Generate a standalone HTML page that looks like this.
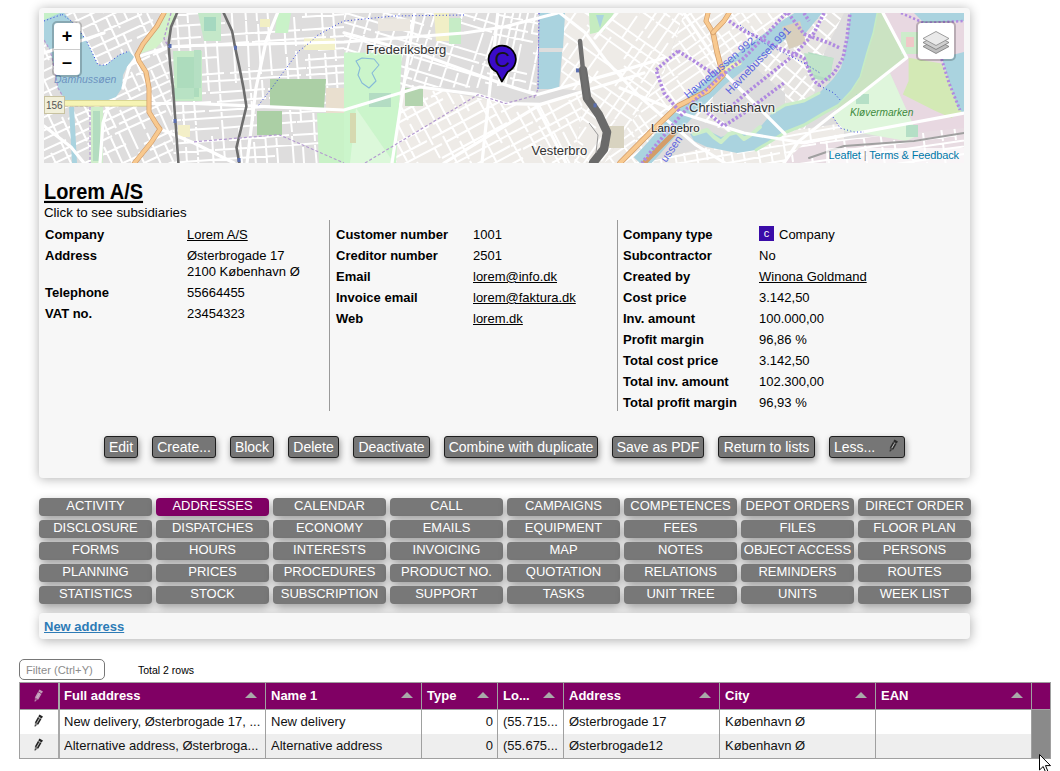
<!DOCTYPE html>
<html><head><meta charset="utf-8">
<style>
*{box-sizing:border-box;margin:0;padding:0}
html,body{width:1060px;height:771px;overflow:hidden;background:#fff;font-family:"Liberation Sans",sans-serif;color:#111;position:relative}
.abs{position:absolute;white-space:nowrap}
#panel{position:absolute;left:39px;top:8px;width:931px;height:470px;background:#f7f7f7;border-radius:4px;box-shadow:0 1px 11px rgba(0,0,0,.3)}
#map{position:absolute;left:44px;top:13px;width:920px;height:150px;overflow:hidden;background:#e2e1df}
.title{left:44px;top:177px;font-size:21px;font-weight:bold;text-decoration:underline;line-height:26px;color:#000;transform:scale(.95,1.085);transform-origin:0 0}
.sub{left:44px;top:205px;font-size:13.3px;line-height:16px;color:#000}
.t{font-size:13px;line-height:16px;color:#000}
.b{font-weight:bold}
.u{text-decoration:underline}
.sep{position:absolute;top:220px;width:1px;height:191px;background:#9a9a9a}
.btn{position:absolute;top:436px;height:22px;border:1px solid #1e1e1e;border-radius:3px;background:#767676;color:#fff;font-size:14px;line-height:20px;text-align:center;box-shadow:1px 3px 6px rgba(0,0,0,.4);white-space:nowrap}
.tab{position:absolute;width:113px;height:18px;border-radius:4px;background:#787878;color:#fff;font-size:13px;line-height:15px;text-align:center;box-shadow:1px 4px 10px rgba(0,0,0,.38);white-space:nowrap;overflow:hidden}
.tab.on{background:#800064}
#panel2{position:absolute;left:39px;top:613px;width:931px;height:26px;background:#f7f7f7;border-radius:4px;box-shadow:1px 2px 11px rgba(0,0,0,.3)}
.newaddr{left:44px;top:619px;font-size:13px;font-weight:bold;color:#2d7bb6;text-decoration:underline;line-height:16px}
#filter{position:absolute;left:19px;top:659px;width:86px;height:21px;border:1px solid #777;border-radius:5px;background:#fff;font-size:11.2px;color:#8c8c8c;padding-left:6px;line-height:20px}
.total{left:138px;top:664px;font-size:10.5px;line-height:12px;color:#000}
#grid{position:absolute;left:19px;top:682px;width:1032px;height:77px;border:1px solid #a0a0a0;background:#fff}
.hl{position:absolute;left:0;width:1030px;height:1px;background:#a0a0a0}
.hdr{position:absolute;left:0;top:0;width:1030px;height:26px;background:#800064}
.row{position:absolute;left:0;width:1012px}
.vl{position:absolute;top:0;width:1px;height:75px;background:#a0a0a0}
.hc{position:absolute;top:0;height:26px;line-height:26px;color:#fff;font-size:13px;font-weight:bold}
.cell{position:absolute;font-size:13px;line-height:24px;color:#111;white-space:nowrap;overflow:hidden}
.arr{position:absolute;top:9px;width:0;height:0;border-left:6px solid transparent;border-right:6px solid transparent;border-bottom:6px solid #a9a9a9}
</style></head><body>
<div id="panel"></div>
<div id="map"><svg width="920" height="150" viewBox="0 0 920 150" style="display:block"><defs><clipPath id="z1"><polygon points="0.0,0.0 132.0,0.0 125.0,40.0 130.0,150.0 0.0,150.0"/></clipPath><clipPath id="z2"><polygon points="132.0,0.0 300.0,0.0 300.0,150.0 130.0,150.0 125.0,40.0"/></clipPath><clipPath id="z3"><polygon points="300.0,0.0 455.0,0.0 440.0,75.0 376.0,74.0 300.0,100.0"/></clipPath><clipPath id="z4"><polygon points="455.0,0.0 496.0,0.0 492.0,80.0 461.0,72.0 440.0,75.0"/></clipPath><clipPath id="z5"><polygon points="300.0,100.0 376.0,74.0 461.0,90.0 497.0,92.0 541.0,78.0 530.0,150.0 300.0,150.0"/></clipPath><clipPath id="z6"><polygon points="521.0,0.0 640.0,0.0 620.0,60.0 560.0,150.0 530.0,150.0 541.0,78.0 516.0,76.0"/></clipPath><clipPath id="z7"><polygon points="640.0,0.0 760.0,0.0 700.0,60.0 640.0,101.0 595.0,150.0 560.0,150.0 620.0,60.0"/></clipPath><clipPath id="z8"><polygon points="760.0,0.0 800.0,0.0 780.0,40.0 760.0,120.0 700.0,125.0 640.0,101.0 700.0,60.0"/></clipPath><clipPath id="z9"><polygon points="700.0,125.0 800.0,110.0 800.0,150.0 600.0,150.0"/></clipPath><clipPath id="z10"><polygon points="760.0,130.0 920.0,115.0 920.0,150.0 740.0,150.0"/></clipPath></defs><rect x="0" y="0" width="920" height="150" fill="#dedddd" />
<polygon points="0.0,0.0 132.0,0.0 125.0,40.0 130.0,150.0 0.0,150.0" fill="#dedddd" />
<path clip-path="url(#z1)" d="M-73 25L23 -19M24 -20L89 -50M93 -52L184 -94M-68 36L-8 8M-8 8L53 -20M7 10L48 -10M48 -10L90 -29M93 -30L135 -50M-61 52L-13 29M-8 27L62 -6M-57 60L28 20M33 18L92 -10M96 -11L144 -34M-52 71L14 40M15 40L58 20M60 18L98 1M102 -1L183 -38M-47 80L42 38M44 37L109 7M-44 88L-6 71M-1 68L88 27M93 25L135 5M141 3L213 -31M-39 98L66 49M-34 108L33 77M66 62L106 43M109 42L162 17M-30 118L46 83M46 83L88 63M92 62L188 17M-25 129L20 108M24 106L54 93M54 93L141 52M142 51L218 16M-21 136L47 104M48 104L132 65M134 64L197 34M-17 145L22 127M27 124L93 93M96 92L189 48M-14 152L71 113M75 111L156 73M157 72L263 23M-10 160L68 123M71 121L122 98M-5 171L82 131M100 131L166 100M168 99L208 80M2 186L33 171M35 170L101 140M106 137L206 91M6 194L113 144M115 143L156 124M161 121L264 73M76 173L161 134M162 133L263 86M15 213L110 169M116 -64L121 -51M124 -47L143 -5M144 -3L160 32M161 34L176 67M188 91L210 138M103 -58L123 -15M125 -11L131 3M134 8L139 21M142 26L155 53M155 54L165 74M165 75L186 121M189 127L211 173M92 -53L99 -38M105 -25L121 9M131 29L153 78M171 117L189 155M81 -48L92 -25M103 -0L120 36M122 41L135 67M135 69L146 92M149 97L159 120M161 123L176 156M73 -44L83 -24M84 -21L90 -7M92 -4L102 19M104 21L124 66M126 68L145 110M148 115L156 133M158 138L178 181M62 -39L84 8M107 57L128 103M130 107L148 145M149 147L157 164M61 -17L76 15M79 20L92 49M93 50L102 71M104 75L117 102M117 102L128 127M129 128L138 149M140 151L152 177M45 -31L60 0M62 4L75 32M77 36L86 56M87 59L96 78M120 129L137 165M34 -26L55 19M57 23L78 69M80 72L101 116M103 120L121 160M21 -20L43 29M44 30L54 50M55 53L74 94M76 97L94 136M95 139L103 156M103 157L126 206M34 32L53 73M54 77L72 115M75 120L97 168M99 173L112 201M25 36L41 70M41 70L52 93M54 97L59 108M60 110L65 122M67 125L87 169M88 170L103 202M-6 -7L11 30M13 35L36 84M37 86L58 130M60 134L72 159M72 160L92 202M-17 -2L5 47M8 52L15 68M17 71L28 94M28 96L43 128M44 130L57 158M58 161L78 202M-29 4L-17 29M-17 29L-7 51M-5 56L15 99M18 104L31 133M52 177L60 194M-39 8L-34 19M1 95L15 125M17 129L34 165M35 167L51 202M-52 14L-31 58M-29 62L-13 97M7 140L15 157M16 159L29 188M31 191L49 231M-64 20L-58 31M-56 37L-38 74M-37 78L-20 113M-20 114L1 159M1 159L22 203M23 205L37 236" stroke="#fff" stroke-width="2.0" fill="none"/>
<polygon points="132.0,0.0 300.0,0.0 300.0,150.0 130.0,150.0 125.0,40.0" fill="#dedddd" />
<path clip-path="url(#z2)" d="M85 -27L200 -35M200 -35L304 -42M308 -43L362 -46M86 -17L126 -19M227 -26L304 -32M305 -32L333 -34M150 -12L228 -18M228 -18L284 -22M287 -22L407 -30M87 5L187 -2M193 -3L290 -10M88 16L181 10M258 4L362 -3M89 29L157 24M163 23L256 17M258 17L313 13M314 13L425 5M89 37L205 29M208 29L282 24M286 24L340 20M90 50L174 44M274 37L370 30M261 47L354 40M91 67L180 60M186 60L213 58M213 58L262 55M263 55L306 52M92 74L149 70M154 69L190 67M190 67L257 62M262 62L372 54M93 85L162 80M166 80L221 76M224 76L332 68M93 94L167 89M173 89L222 85M225 85L251 83M252 83L283 81M284 81L318 79M94 103L161 98M165 98L249 92M253 92L302 88M305 88L331 86M333 86L369 83M94 110L137 107M138 107L212 102M214 102L300 96M305 96L421 87M95 120L175 115M178 115L252 109M253 109L354 102M96 133L179 127M185 127L245 122M249 122L284 120M289 119L377 113M97 142L168 137M171 137L203 135M205 135L319 127M323 126L367 123M97 152L194 145M194 145L231 143M326 136L353 134M98 163L170 158M173 158L274 151M99 176L203 169M205 168L276 164M100 188L134 185M140 185L179 182M218 179L304 173M306 173L353 170M101 197L175 192M178 192L293 184M294 184L368 179M318 -53L321 -11M321 -5L325 41M325 42L327 72M327 76L331 126M331 129L333 162M333 166L337 218M302 -52L303 -26M307 24L310 63M310 67L314 121M314 121L316 153M316 158L319 198M285 -51L288 -7M289 -2L292 48M292 53L295 98M296 102L298 139M299 144L300 162M300 165L302 187M274 -50L278 4M278 4L280 36M281 40L284 85M284 89L286 115M286 118L287 131M287 136L289 155M289 160L291 189M259 -49L260 -31M260 -29L262 3M265 41L267 76M268 79L271 128M271 132L274 165M274 170L275 186M275 187L278 227M246 -48L250 0M250 4L252 33M252 38L256 84M256 86L257 108M259 134L262 181M263 183L264 209M236 -47L238 -16M239 -11L242 41M243 44L246 96M246 97L248 119M248 123L250 151M250 156L252 178M252 182L254 211M220 -46L224 6M224 10L228 62M232 121L236 175M236 178L239 219M210 -45L213 8M214 11L217 61M218 67L219 84M221 119L224 163M225 167L226 189M226 191L228 215M198 -45L202 7M202 8L203 29M204 31L205 54M205 55L207 78M207 80L209 108M210 129L214 174M214 177L217 226M187 -12L189 20M189 22L192 70M195 114L199 162M199 165L201 199M169 -21L173 30M173 32L176 78M176 79L178 106M178 107L181 148M181 153L184 193M157 -42L159 -9M159 -8L161 25M161 27L165 78M168 123L170 156M171 157L172 173M172 174L173 195M141 -41L144 10M145 13L148 65M148 65L152 112M152 114L154 142M154 144L156 175M156 179L160 226M133 6L136 49M136 53L137 66M137 67L138 87M139 91L141 130M142 134L144 167M144 171L148 218M120 -39L122 -19M122 -15L124 20M129 83L130 107M131 112L134 154M134 160L137 196M137 199L140 241M110 -38L113 4M113 9L115 30M115 34L117 62M118 68L119 88M119 93L123 138M123 141L125 168M125 169L126 190M126 191L128 223M103 2L105 40M106 45L108 87M109 88L112 136M112 136L115 185M115 187L117 213M88 -37L90 -6M91 -1L91 12M91 13L93 31M93 33L94 48M94 53L97 93M97 98L101 149" stroke="#fff" stroke-width="2.0" fill="none"/>
<polygon points="300.0,0.0 455.0,0.0 440.0,75.0 376.0,74.0 300.0,100.0" fill="#dedddd" />
<path clip-path="url(#z3)" d="M312 -69L386 -47M389 -46L470 -21M470 -21L570 10M308 -57L375 -36M378 -36L460 -10M463 -9L566 22M305 -46L335 -37M338 -36L390 -20M395 -19L461 2M371 -14L404 -4M405 -3L517 31M299 -26L369 -5M371 -4L448 19M295 -14L380 12M292 -3L335 10M339 11L388 26M393 28L507 62M289 6L327 17M331 19L435 50M438 51L466 60M286 18L338 34M341 35L368 43M370 44L450 68M450 68L552 100M282 30L340 48M343 49L426 74M279 39L368 66M370 67L483 101M277 46L339 65M339 65L419 89M419 89L500 114M274 55L363 82M363 82L392 91M398 92L444 107M448 108L501 124M272 63L350 87M352 88L446 117M449 118L540 145M268 75L314 89M316 89L404 116M406 117L460 133M265 86L304 98M308 100L412 131M413 132L448 142M449 143L547 173M262 95L359 124M364 126L419 143M421 143L517 173M259 104L321 123M327 124L365 136M488 -18L482 3M480 8L469 46M468 48L460 73M460 74L449 110M476 -21L473 -9M472 -8L465 15M454 50L447 76M445 81L435 112M435 114L429 134M427 138L422 157M420 162L407 207M464 -25L450 22M449 23L442 46M441 48L432 79M432 79L428 93M422 113L417 128M417 130L409 154M408 158L397 193M454 -28L449 -12M447 -8L439 19M439 20L430 47M429 52L421 79M420 82L411 112M410 114L398 155M442 -32L436 -10M435 -6L430 8M414 60L399 109M399 110L390 141M430 -36L417 6M417 7L406 42M406 43L392 86M387 103L383 116M383 117L369 163M415 -40L404 -5M404 -5L391 38M390 42L385 58M383 64L379 78M378 81L364 126M364 127L357 149M404 -43L396 -17M396 -15L387 14M386 17L370 68M369 72L363 91M362 95L350 134M382 -1L373 29M373 30L366 52M365 56L357 80M356 84L340 135M386 -49L380 -29M379 -26L370 1M370 3L362 28M362 29L346 81M345 85L336 115M334 120L324 154M372 -53L363 -25M362 -20L352 11M352 12L339 53M338 59L323 105M323 106L316 128M358 -58L350 -33M349 -29L345 -14M343 -9L336 14M335 17L323 57M322 59L313 88M301 127L291 161M333 -23L320 21M320 22L308 62M306 66L299 89M298 94L286 133M334 -65L326 -39M325 -35L314 -0M313 3L302 41M300 46L288 84M287 90L281 107M280 111L269 147M323 -68L315 -44M315 -44L303 -3M302 0L289 42M280 71L270 103M269 108L261 134" stroke="#fff" stroke-width="2.0" fill="none"/>
<polygon points="455.0,0.0 496.0,0.0 492.0,80.0 461.0,72.0 440.0,75.0" fill="#dedddd" />
<path clip-path="url(#z4)" d="M406 82L413 48M414 47L420 16M421 11L442 -88M415 84L426 34M436 -16L458 -116M423 85L441 3M442 -2L464 -108M433 88L448 16M454 34L476 -73M450 91L467 11M467 10L479 -43M457 93L474 10M475 7L489 -61M464 94L477 31M478 28L489 -23M488 19L494 -11M481 98L491 51M491 50L505 -17M492 100L516 -13M509 104L520 52M520 49L528 12M529 7L541 -49M425 -15L452 -10M452 -10L505 2M507 2L521 5M522 5L562 14M445 0L479 7M482 8L535 19M420 5L434 8M435 9L484 19M487 20L500 22M502 23L522 27M436 18L489 29M494 30L534 38M416 25L432 28M489 40L528 48M414 37L447 45M501 56L540 64M412 46L464 57M465 57L483 61M410 53L461 64M466 65L482 69M487 70L536 80M408 62L448 71M453 72L498 81M501 82L514 85M406 73L454 83M455 83L482 89M485 90L497 92M502 93L517 97" stroke="#fff" stroke-width="2.0" fill="none"/>
<polygon points="300.0,100.0 376.0,74.0 461.0,90.0 497.0,92.0 541.0,78.0 530.0,150.0 300.0,150.0" fill="#eeebe7" />
<path clip-path="url(#z5)" d="M246 63L330 18M252 74L283 57M284 57L352 21M352 21L392 -1M397 -3L484 -49M255 81L329 42M329 42L424 -9M261 92L329 57M330 56L431 2M436 -0L533 -52M265 99L299 81M301 80L374 42M377 40L428 13M432 11L494 -23M497 -24L578 -67M268 106L353 61M353 60L442 14M445 12L467 -0M468 -1L571 -55M274 117L375 63M377 62L443 27M444 27L529 -19M278 123L379 69M456 28L556 -25M282 131L319 111M429 53L485 23M489 21L580 -27M285 138L384 85M387 84L479 34M483 32L585 -22M289 144L347 113M352 111L399 86M500 32L563 -1M293 152L349 122M459 64L523 30M524 29L569 5M297 160L385 113M389 111L467 70M469 69L550 26M303 170L383 128M388 125L464 84M464 84L532 48M307 179L398 131M402 129L453 101M457 99L549 51M398 145L463 110M318 200L401 156M402 155L489 109M493 107L550 76M323 209L406 165M407 165L466 133M467 133L547 90M547 90L608 58M327 216L376 190M377 190L402 176M404 175L477 136M479 136L576 83M331 224L388 194M392 191L445 163M449 161L479 145M556 104L613 74M335 232L369 214M530 129L561 112M564 110L598 92M340 240L398 209M400 208L503 153M508 150L607 98M346 251L410 218M411 217L516 161M517 160L579 127M350 260L397 235M401 233L425 220M426 220L527 166M528 166L572 142M578 139L624 114M355 270L428 231M429 231L515 185M518 183L568 157M571 155L632 123M360 279L386 265M490 210L513 198M515 196L586 159M365 287L458 237M460 237L552 188M556 185L636 143M466 -61L474 -45M476 -42L492 -13M492 -12L510 21M510 21L520 41M522 45L541 81M571 136L577 149M470 -34L488 -1M489 0L507 34M507 35L521 60M521 60L538 93M540 97L549 113M550 115L567 148M570 153L583 178M451 -53L469 -18M472 -13L488 18M489 20L506 51M508 55L524 85M525 87L538 111M538 112L559 150M559 150L578 186M452 -25L464 -2M464 -2L485 36M485 37L510 84M521 103L543 145M544 148L557 172M558 174L576 208M433 -43L455 -1M473 33L491 66M493 70L507 96M507 96L516 114M519 119L534 148M551 179L565 206M425 -39L434 -23M435 -21L458 23M459 25L470 46M471 47L482 67M482 67L506 113M509 118L528 155M529 157L554 204M417 -35L436 1M436 2L446 21M447 22L454 35M457 41L470 65M471 67L482 89M484 93L493 109M495 113L520 159M521 162L546 209M405 -29L419 -3M421 0L446 49M447 50L455 65M473 99L484 119M485 121L492 134M493 136L505 158M505 158L530 206M396 -24L413 7M413 9L421 23M442 63L448 74M449 76L467 109M490 152L504 179M505 181L513 196M513 196L534 236M389 -20L396 -6M396 -6L410 21M411 23L418 35M418 36L428 54M429 56L436 70M437 72L458 111M461 116L480 151M481 154L496 182M498 185L522 232M380 -15L402 26M403 27L410 40M410 41L430 77M430 78L451 117M451 118L458 130M483 178L494 198M495 200L507 223M369 -9L389 29M390 32L400 49M401 51L425 98M439 123L453 150M456 154L480 200M483 206L501 239M366 8L383 41M386 46L400 71M400 73L410 91M411 93L432 132M446 158L469 201M470 203L478 219M480 222L486 234M348 2L372 46M374 51L387 73M389 78L407 112M408 114L414 125M416 128L425 146M426 148L432 159M433 161L449 190M450 192L475 240M338 7L357 43M359 48L372 72M374 76L390 106M390 106L398 120M399 123L420 163M421 164L446 210M448 214L455 227M326 14L346 52M364 85L389 132M390 134L396 145M418 186L436 220M436 221L456 258M317 18L340 63M341 64L352 85M355 90L364 107M366 111L376 130M402 179L416 205M418 208L442 253M307 24L332 71M332 71L340 86M341 89L351 107M353 110L371 145M373 149L380 162M382 167L407 213M429 254L449 291M299 28L309 46M309 46L318 63M318 63L339 102M341 107L363 148M366 153L391 200M393 205L401 219M401 220L411 238M412 241L432 277M290 33L307 64M307 64L325 98M345 136L352 149M354 153L366 175M367 177L380 201M382 206L396 231M397 234L417 271M282 37L294 61M295 63L302 76M303 77L322 113M323 114L330 129M333 134L350 165M352 170L360 184M362 188L368 199M369 201L375 212M376 215L389 240M401 261L416 290M269 44L289 80M289 81L302 106M323 145L342 180M342 180L363 220M389 268L414 317M262 48L283 88M286 93L311 142M313 144L324 165M324 166L344 202M344 203L359 231M384 279L390 290M251 53L260 69M262 74L287 120M287 121L302 148M304 152L317 177M335 211L343 226M345 229L358 254" stroke="#fff" stroke-width="2.0" fill="none"/>
<polygon points="521.0,0.0 640.0,0.0 620.0,60.0 560.0,150.0 530.0,150.0 541.0,78.0 516.0,76.0" fill="#eeebe7" />
<path clip-path="url(#z6)" d="M548 -61L633 -2M634 -1L655 13M657 15L736 71M543 -54L626 4M628 6L691 49M692 50L755 94M537 -44L610 7M612 9L640 28M644 31L699 69M700 70L770 119M531 -36L567 -10M664 58L735 107M523 -25L546 -9M549 -7L593 24M593 24L682 86M683 87L755 137M517 -17L549 5M553 8L628 60M632 63L653 78M658 81L727 129M543 12L596 50M598 51L695 119M580 53L665 113M668 115L725 155M501 7L579 62M582 64L663 121M663 121L693 142M608 93L649 122M652 123L683 145M489 24L535 56M539 59L632 124M635 126L680 157M482 33L576 99M576 99L631 137M631 138L712 194M609 133L663 171M471 49L528 89M530 90L562 112M565 114L597 137M597 137L626 157M628 159L718 222M467 55L552 115M461 63L536 115M455 73L510 112M513 114L539 132M587 165L674 226M449 81L541 145M542 146L626 204M445 87L479 110M479 111L577 179M582 182L657 235M438 96L468 116M470 118L529 159M529 160L590 202M593 204L625 227M717 47L705 65M703 68L673 110M673 111L658 132M656 134L630 172M629 173L614 194M707 41L683 76M680 80L664 102M660 107L649 123M648 125L640 137M637 140L627 154M627 155L611 178M609 180L583 218M696 33L682 53M679 56L651 97M649 100L639 114M625 134L601 168M599 171L585 191M584 192L556 232M688 27L667 58M636 101L613 135M612 136L591 167M678 20L669 31M669 32L661 44M658 48L649 61M648 62L638 77M637 77L606 122M604 125L583 154M582 157L568 176M565 180L553 197M668 13L638 56M636 59L626 73M625 75L596 116M594 119L567 157M564 161L535 203M657 5L629 45M628 47L618 61M615 65L599 88M598 89L589 102M587 106L557 148M647 -2L628 25M624 30L597 70M594 74L571 106M571 107L560 121M558 124L534 159M532 162L522 176M640 -7L609 38M608 38L593 61M590 64L561 106M535 143L517 169M631 -13L604 25M602 29L571 73M568 78L554 97M542 114L534 126M531 130L515 153M514 154L487 193M624 -18L601 16M599 18L592 28M589 32L580 46M546 94L527 121M527 121L502 156M613 -25L595 -0M593 3L578 25M554 58L546 70M544 73L522 105M519 109L500 136M499 137L491 148M605 -31L594 -16M567 24L542 59M542 59L513 100M500 118L484 142M595 -38L586 -25M584 -22L562 10M537 46L514 78M499 100L481 125M587 -43L564 -11M562 -7L543 20M542 21L525 46M524 47L511 66M510 67L495 88M493 91L465 131M580 -49L560 -22M557 -17L545 1M524 30L498 68M495 72L466 113M463 117L453 132M571 -55L562 -43M561 -42L551 -27M551 -27L539 -10M537 -8L513 27M512 29L497 50M496 51L485 67M483 71L472 85M471 87L450 117M547 -42L530 -17M528 -15L518 -0M515 4L499 27M498 28L469 70M468 71L443 106" stroke="#fff" stroke-width="2.0" fill="none"/>
<polygon points="640.0,0.0 760.0,0.0 700.0,60.0 640.0,101.0 595.0,150.0 560.0,150.0 620.0,60.0" fill="#eeebe7" />
<path clip-path="url(#z7)" d="M481 46L513 23M513 23L576 -21M576 -21L636 -63M638 -64L664 -82M666 -84L751 -143M487 55L581 -11M583 -13L680 -80M684 -83L727 -113M492 62L576 3M579 1L649 -48M652 -50L677 -68M678 -69L752 -120M498 70L554 31M558 29L633 -24M504 78L583 23M585 21L609 4M679 -45L754 -97M597 24L669 -26M514 93L565 58M565 58L621 18M622 18L647 0M647 -0L687 -28M691 -31L718 -50M721 -51L810 -114M519 100L572 63M576 60L671 -6M672 -7L711 -34M713 -35L779 -82M525 108L574 74M578 70L653 18M656 16L729 -35M530 116L581 80M585 78L610 60M611 59L644 36M644 36L665 21M665 21L714 -13M718 -16L787 -64M535 123L584 89M588 86L686 18M688 16L715 -3M717 -4L758 -33M539 129L634 63M634 62L697 19M544 136L593 102M597 99L659 56M660 55L698 28M703 25L790 -36M551 146L589 119M591 118L613 102M615 101L655 72M720 27L815 -39M555 152L591 127M594 125L685 62M687 60L759 10M562 162L620 121M624 119L670 86M675 83L726 47M731 44L808 -10M567 168L658 105M746 43L794 9M571 174L667 107M669 105L762 40M767 37L851 -23M576 181L615 154M616 153L669 116M674 113L722 79M725 77L815 13M581 189L643 146M643 146L698 108M698 108L781 50M783 48L860 -6M587 198L651 153M651 153L716 108M717 107L797 51M594 207L685 143M688 141L748 99M752 97L807 58M681 162L721 133M726 130L812 70M812 70L867 31M605 224L678 173M682 170L715 147M610 230L664 192M666 191L701 166M705 164L727 148M729 147L751 131M754 129L814 87M615 237L638 221M640 220L670 198M675 195L759 136M760 136L852 71M619 243L644 226M676 204L758 146M790 124L837 91M624 250L655 229M656 228L685 208M685 208L721 182M723 181L802 126M805 124L839 100M692 -106L717 -70M736 -42L763 -4M765 -1L793 38M819 76L847 115M683 -100L699 -78M699 -77L708 -65M709 -64L720 -48M723 -44L751 -4M752 -2L765 16M766 18L777 34M824 102L840 124M674 -94L694 -66M695 -64L702 -54M703 -53L719 -29M720 -29L734 -9M736 -6L756 23M799 85L824 120M664 -86L692 -45M695 -41L722 -3M724 -0L743 27M746 31L773 70M776 75L800 108M801 110L808 120M810 122L819 136M654 -79L676 -48M678 -45L685 -35M687 -32L707 -4M709 -1L718 11M718 13L727 25M730 29L742 46M745 51L764 78M766 80L789 114M791 117L814 150M646 -74L671 -38M673 -35L681 -25M681 -24L705 10M707 13L721 33M723 36L741 62M759 88L767 98M770 102L800 146M639 -69L669 -26M671 -23L681 -8M685 -3L695 11M697 14L725 55M726 56L755 97M755 97L762 107M764 110L778 130M779 132L794 153M628 -62L656 -22M685 19L701 42M704 47L726 77M727 79L741 99M741 99L769 139M772 143L785 162M640 -29L667 9M670 14L700 57M703 60L711 72M712 74L738 110M747 124L766 150M611 -50L626 -29M627 -27L638 -11M639 -10L668 31M699 76L710 91M710 92L725 113M726 115L739 134M742 138L768 174M602 -43L618 -20M633 0L652 28M655 32L667 50M668 51L685 75M716 119L724 130M727 135L745 161M591 -35L622 9M622 9L633 24M635 28L666 71M668 74L693 111M695 113L703 125M704 126L734 168M735 169L745 184M581 -28L591 -15M593 -12L614 18M615 19L636 50M658 81L686 122M703 145L717 166M719 168L742 202M571 -21L601 21M601 21L616 43M619 46L630 63M633 67L652 94M656 99L670 120M671 121L683 139M684 140L715 183M715 184L728 202M560 -13L570 2M571 3L602 47M602 47L610 59M613 63L642 104M646 109L675 152M676 153L706 196M706 196L729 229M552 -8L563 8M580 32L610 76M611 78L639 116M640 119L648 130M650 132L679 174M680 176L709 217M541 -0L567 37M618 110L632 129M633 131L646 150M649 154L679 196M682 201L689 212M529 8L560 51M561 52L578 77M581 82L593 98M595 102L622 141M625 144L640 165M641 167L667 204M668 205L693 241M523 12L543 42M576 89L585 101M587 104L611 139M612 140L629 164M632 168L657 204M659 207L669 221M670 223L691 252M516 17L529 36M529 37L558 78M577 106L590 124M592 127L623 172M625 174L652 213M655 217L663 228M522 51L535 70M538 74L548 88M550 91L562 108M563 109L575 126M577 129L600 162M600 162L615 183M615 184L630 205M633 209L653 238M496 31L516 61M517 61L527 77M529 79L543 98M546 103L561 124M582 155L598 178M601 181L613 198M616 203L633 227M635 229L663 270M489 36L510 65M513 69L522 82M523 84L543 112M564 142L583 169M586 174L598 191M601 195L632 239M632 240L662 282M480 43L507 81M510 85L522 103M525 107L552 146M553 147L570 171M571 173L581 187M583 191L612 232M614 235L640 271" stroke="#fff" stroke-width="2.0" fill="none"/>
<polygon points="760.0,0.0 800.0,0.0 780.0,40.0 760.0,120.0 700.0,125.0 640.0,101.0 700.0,60.0" fill="#e6e4e1" />
<path clip-path="url(#z8)" d="M705 -86L795 -11M798 -8L823 13M828 17L862 46M864 47L916 91M698 -77L723 -55M723 -55L762 -23M766 -19L813 20M814 21L905 98M692 -70L759 -13M762 -10L818 36M822 39L883 91M684 -60L738 -14M743 -10L804 41M808 45L848 78M679 -54L753 9M831 74L886 121M672 -46L728 1M732 5L789 52M790 53L826 83M828 85L867 117M664 -37L748 34M750 35L781 61M786 65L820 94M821 95L841 112M659 -31L710 12M712 14L764 57M766 59L806 93M807 93L834 116M652 -22L707 25M712 29L736 49M736 49L784 89M678 17L768 92M772 95L834 147M638 -5L663 16M665 18L719 63M719 63L781 115M781 115L832 158M631 2L679 43M680 43L714 72M714 72L786 132M789 135L810 152M626 8L716 83M718 85L789 144M620 16L693 78M609 29L689 97M691 99L780 173M603 36L667 90M670 92L757 166M761 169L824 222M597 44L654 92M656 93L680 113M681 115L731 156M734 159L774 192M681 127L754 189M583 60L663 126M667 129L743 194M576 69L605 93M608 96L634 117M596 97L663 153M667 156L745 222M867 47L850 68M848 70L837 83M836 85L823 99M822 101L802 125M802 125L788 142M787 142L759 176M759 177L736 204M732 208L709 235M857 38L836 63M796 110L780 130M779 131L750 165M747 169L723 198M721 200L688 240M817 63L799 84M797 87L780 106M779 108L767 121M765 124L731 165M727 169L712 188M710 190L681 225M838 23L820 45M818 47L784 87M782 90L757 120M754 123L744 135M704 183L668 225M828 14L793 56M790 60L764 91M763 92L749 109M748 110L730 132M728 133L703 163M822 9L807 26M806 27L783 55M780 58L751 93M748 96L724 125M703 149L678 179M813 2L790 30M788 32L764 61M762 63L744 85M741 88L728 103M725 106L715 119M712 122L698 138M697 140L665 178M807 -4L779 29M778 30L743 72M740 75L717 103M717 103L686 139M795 -14L784 -1M783 1L748 42M744 47L711 86M710 87L699 101M695 105L669 136M667 139L641 170M787 -20L779 -10M777 -8L750 24M748 26L721 58M719 61L695 90M694 91L667 123M667 123L637 159M776 -29L755 -4M754 -2L728 28M666 103L641 132M769 -36L739 -0M738 1L724 18M721 21L697 50M694 53L671 81M669 83L634 125M633 126L609 155M760 -43L731 -8M730 -7L698 31M697 33L672 62M751 -51L733 -29M731 -26L706 3M702 8L687 26M686 27L661 57M660 58L641 80M639 82L627 97M742 -58L721 -34M718 -30L695 -2M693 1L671 27M669 29L649 53M646 56L634 71M630 75L608 101M706 -36L686 -12M654 25L632 52M612 76L584 108M721 -76L708 -60M706 -57L681 -27M680 -26L669 -14M669 -13L647 12M645 15L625 39M625 39L607 60M605 62L582 90M713 -83L696 -63M695 -62L674 -37M674 -36L642 1M642 1L622 25M620 28L593 60M590 63L569 88" stroke="#fff" stroke-width="2.0" fill="none"/>
<polygon points="700.0,125.0 800.0,110.0 800.0,150.0 600.0,150.0" fill="#eeebe7" />
<path clip-path="url(#z9)" d="M577 48L636 37M642 36L667 32M672 31L704 25M708 25L736 20M740 19L807 7M578 56L613 50M619 49L699 35M701 34L795 18M580 67L673 51M673 51L723 42M725 42L825 24M582 79L612 74M615 73L642 69M647 68L682 61M763 47L788 43M792 42L818 38M585 91L648 80M652 79L686 74M769 59L845 45M796 63L878 48M588 111L668 97M729 86L796 74M590 121L616 116M618 116L683 105M686 104L741 94M745 94L779 88M779 88L877 70M592 132L640 124M752 104L839 88M740 115L766 110M767 110L828 99M595 150L633 143M633 143L666 137M670 136L701 131M705 130L801 113M596 157L688 141M693 140L764 128M764 128L838 115M598 165L695 148M695 148L736 140M740 140L801 129M803 129L917 109M720 151L793 138M798 137L829 131M600 181L693 164M693 164L783 148M786 148L870 133M602 190L709 171M714 170L806 154M812 153L840 148M604 201L666 189M668 189L749 175M749 175L807 165M810 164L838 159M756 186L790 180M792 179L889 162M649 212L708 202M711 201L784 188M788 188L835 179M674 216L709 210M761 201L806 193M808 193L860 183M612 248L660 240M663 239L720 229M722 229L766 221M769 220L851 206M782 7L787 32M787 36L791 56M791 59L794 77M795 79L800 110M801 114L810 164M810 165L816 200M816 200L822 235M771 9L780 56M780 56L787 99M788 102L790 117M791 122L794 136M794 137L797 153M798 158L805 198M806 203L812 236M761 11L765 34M765 36L769 56M769 61L776 97M777 101L779 114M788 164L792 187M792 190L799 230M747 13L752 40M752 43L761 94M762 95L769 140M770 140L773 158M773 161L782 211M782 212L789 253M732 16L741 67M741 70L744 85M744 87L750 118M758 165L761 181M720 18L729 69M729 73L739 126M739 127L747 175M748 176L756 223M756 224L760 248M711 52L715 71M715 74L719 94M719 98L726 134M727 139L736 189M736 192L745 244M694 22L698 42M702 65L706 87M707 93L711 119M711 120L714 135M714 137L723 184M723 184L728 216M729 218L732 239M679 25L684 53M684 54L693 105M693 105L701 148M701 149L703 161M704 166L709 192M710 197L712 212M713 216L722 268M667 27L676 75M676 79L685 128M686 132L695 181M696 187L700 212M700 214L708 259M658 29L667 78M668 82L671 103M675 123L684 175M685 179L693 224M693 227L696 240M654 90L657 109M657 111L660 123M660 126L664 147M668 174L677 223M678 227L681 245M634 33L639 65M640 68L648 111M648 113L655 154M656 157L662 193M663 196L665 212M666 216L674 259M621 35L627 70M628 73L635 115M636 120L643 157M643 158L650 200M651 206L659 247M613 37L622 86M622 88L628 122M628 124L636 169M637 174L645 216M645 219L654 268M598 39L608 92M608 97L615 134M615 135L620 164M621 169L627 200M598 87L603 119M603 120L611 163M611 163L620 213M621 218L629 264M588 89L593 122M594 124L601 166M602 167L609 209M610 215L617 257" stroke="#fff" stroke-width="2.0" fill="none"/>
<polygon points="839.0,0.0 920.0,0.0 920.0,150.0 770.0,150.0 800.0,132.0 874.0,123.0 846.0,60.0 862.7,44.7" fill="#e8d8e1" />
<polygon points="760.0,130.0 920.0,115.0 920.0,150.0 740.0,150.0" fill="#e8dce2" />
<path clip-path="url(#z10)" d="M721 55L787 46M788 45L889 31M893 31L933 25M837 45L943 31M723 68L812 56M816 55L903 43M724 74L749 71M755 70L808 62M813 62L868 54M870 54L901 49M906 49L946 43M725 80L796 70M876 59L954 48M726 86L824 72M727 93L775 87M778 86L820 80M823 80L863 74M868 74L966 60M728 101L753 98M755 97L810 90M813 89L892 78M897 77L985 65M729 111L803 101M803 101L874 91M877 90L941 81M730 119L771 113M777 112L840 103M840 103L916 93M916 93L951 88M732 127L799 117M802 117L869 107M875 107L965 94M733 137L772 131M776 130L865 118M869 117L971 103M804 137L913 122M735 154L823 141M827 141L938 125M736 159L779 153M901 136L996 123M737 167L824 155M826 155L885 146M889 146L933 139M739 177L825 165M827 164L860 160M862 159L930 150M740 184L830 171M833 171L882 164M884 163L977 150M741 191L811 182M815 181L915 167M741 197L846 183M846 183L902 175M906 174L988 163M742 204L776 199M782 198L827 192M833 191L876 185M743 210L848 195M851 195L952 181M744 217L774 213M854 202L935 190M852 211L963 195M746 233L826 222M826 222L933 207M898 25L901 52M902 55L905 75M905 76L912 127M918 172L922 199M922 199L924 213M885 27L887 47M890 69L896 106M896 108L899 128M899 131L905 175M906 179L913 229M866 30L870 60M871 65L875 93M876 99L878 116M879 120L882 146M883 149L890 199M890 205L896 243M853 32L856 50M857 54L859 70M859 73L864 110M868 139L875 188M875 188L882 235M837 34L844 85M850 127L853 147M854 152L857 174M857 178L863 215M863 218L865 231M831 81L835 109M835 112L841 152M841 157L846 193M847 195L851 226M851 227L856 265M808 38L810 53M810 54L814 85M815 86L819 120M819 121L822 138M822 143L829 189M830 193L836 237M788 41L793 80M794 84L799 118M799 120L805 161M805 166L809 194M813 221L818 259M770 43L777 93M778 98L782 124M782 125L786 158M787 161L790 184M791 187L796 227M797 233L802 268M755 45L762 97M768 144L772 172M773 176L780 227M742 100L744 116M745 118L749 149M750 154L756 198M760 224L762 242" stroke="#fff" stroke-width="2.0" fill="none"/>
<polygon points="0.0,0.0 20.0,0.0 28.0,8.5 37.0,20.0 42.0,27.0 47.0,37.0 54.0,52.0 62.0,52.0 75.0,42.0 85.0,38.0 90.0,44.0 83.0,54.0 79.0,62.0 78.0,75.0 72.0,84.0 64.0,87.0 21.0,87.0 14.0,75.0 11.0,59.0 8.5,47.0 6.0,37.0 0.0,27.0" fill="#aad3df" />
<polyline points="18.0,1.4 28.0,8.5 37.0,20.0 42.0,27.0 47.0,37.0 54.0,52.0 62.0,52.0 75.0,42.0 85.0,38.0" fill="none" stroke="#3344dd" stroke-width="1" stroke-linejoin="round" stroke-linecap="butt" stroke-dasharray="1 2.4"/>
<polyline points="0.0,8.0 18.0,1.4" fill="none" stroke="#3344dd" stroke-width="1" stroke-linejoin="round" stroke-linecap="butt" stroke-dasharray="1 2.4"/>
<polygon points="0.0,0.0 16.0,0.0 0.0,7.0" fill="#c6f0c8" />
<polyline points="0.0,27.0 6.0,37.0 8.5,47.0 11.0,59.0 14.0,75.0 21.0,87.0" fill="none" stroke="#b49ad0" stroke-width="1.2" stroke-linejoin="round" stroke-linecap="butt" stroke-dasharray="3 2"/>
<polygon points="25.0,94.0 30.0,94.0 33.0,150.0 28.0,150.0" fill="#aad3df" />
<polygon points="120.0,0.0 131.0,0.0 126.0,20.0 112.0,35.0 95.0,41.0 99.0,31.0 113.0,12.0" fill="#d3f2c9" />
<rect x="47" y="94" width="12" height="56" fill="#cfeecb" />
<rect x="49" y="98" width="7" height="50" fill="#b3dcc0" />
<polyline points="46.0,94.0 46.0,150.0" fill="none" stroke="#b49ad0" stroke-width="1.2" stroke-linejoin="round" stroke-linecap="butt" stroke-dasharray="3 2"/>
<polyline points="21.0,93.0 46.0,93.0" fill="none" stroke="#b49ad0" stroke-width="1.2" stroke-linejoin="round" stroke-linecap="butt" stroke-dasharray="3 2"/>
<polygon points="129.0,38.0 158.0,38.0 158.0,88.0 131.0,88.0" fill="#c4eac6" />
<rect x="133" y="44" width="22" height="40" fill="#addcbd" />
<polygon points="128.0,75.0 150.0,75.0 150.0,86.0 131.0,86.0" fill="#b8e2c4" />
<polygon points="154.0,0.0 177.0,0.0 177.0,28.0 160.0,28.0" fill="#c4e8c9" />
<rect x="160" y="4" width="12" height="14" fill="#a5d8c0" />
<rect x="150" y="37" width="7" height="38" fill="#b5dfc3" />
<rect x="134" y="112" width="12" height="12" fill="#f3efc8" />
<polygon points="233.0,0.0 247.0,0.0 244.0,20.0 231.0,20.0" fill="#c9f2c8" />
<rect x="216" y="6" width="10" height="8" fill="#f2efc4" />
<rect x="260" y="25.5" width="31" height="11.5" fill="#f3f1c8" />
<polygon points="226.0,66.0 282.0,66.0 280.0,95.0 226.0,95.0" fill="#abcfa5" />
<polygon points="213.0,98.0 238.0,98.0 238.0,122.0 213.0,122.0" fill="#abcfa5" />
<polygon points="273.0,100.0 300.0,100.0 300.0,150.0 275.0,150.0" fill="#c9f2c7" />
<polygon points="282.0,75.0 300.0,75.0 300.0,100.0 282.0,100.0" fill="#e9dfcf" />
<polygon points="300.0,39.6 358.0,40.0 352.0,150.0 300.0,150.0" fill="#cbf5cb" />
<polygon points="312.0,95.0 350.0,150.0 306.0,150.0" fill="#dcf8da" />
<rect x="306" y="100" width="6" height="30" fill="#d6d9b0" />
<polyline points="312.0,48.0 318.0,45.0 330.0,46.0 335.0,52.0 328.0,60.0 332.0,68.0 325.0,75.0 318.0,70.0 314.0,62.0 316.0,55.0 312.0,48.0" fill="none" stroke="#86b9d8" stroke-width="1.1" stroke-linejoin="round" stroke-linecap="round" />
<rect x="325" y="80" width="22" height="14" fill="#b3dcc3" />
<polygon points="390.0,0.0 405.0,0.0 405.0,28.0 392.0,28.0" fill="#f1efc6" />
<polygon points="405.0,5.0 417.0,5.0 417.0,31.0 405.0,31.0" fill="#c6ecc6" />
<polygon points="334.0,5.7 366.0,5.7 366.0,18.0 334.0,18.0" fill="#ebe7e0" />
<rect x="361" y="75" width="18" height="18" fill="#b3d3ae" />
<polygon points="495.0,0.0 521.0,0.0 519.0,35.0 495.0,35.0" fill="#aad3df" />
<polygon points="495.0,39.0 518.0,39.0 515.0,76.0 494.0,76.0" fill="#aad3df" />
<polyline points="495.0,0.0 494.0,76.0 490.0,85.0" fill="none" stroke="#b49ad0" stroke-width="1.2" stroke-linejoin="round" stroke-linecap="butt" stroke-dasharray="2 1.5"/>
<polyline points="495.0,0.0 494.0,76.0" fill="none" stroke="#3344dd" stroke-width="0.8" stroke-linejoin="round" stroke-linecap="butt" stroke-dasharray="1 2.4"/>
<polygon points="545.0,0.0 570.0,0.0 560.0,18.0 546.0,21.0" fill="#c5ecc0" />
<polygon points="552.0,2.0 560.0,2.0 556.0,15.0" fill="#aad3df" />
<polygon points="565.0,113.0 580.0,113.0 580.0,135.0 565.0,135.0" fill="#d8d3c0" />
<polygon points="669.0,64.0 700.0,45.0 741.0,80.0 741.0,121.0 700.0,125.0 669.0,100.0" fill="#dcdcdc" />
<polyline points="770.0,-2.0 747.0,12.0 712.0,37.0 677.0,64.0 650.0,90.0 630.0,112.0 610.0,135.0 596.0,150.0" fill="none" stroke="#aad3df" stroke-width="17" stroke-linejoin="round" stroke-linecap="butt" />
<polygon points="735.0,14.0 758.0,0.0 778.0,0.0 760.0,22.0 748.0,35.0" fill="#aad3df" />
<polygon points="738.0,14.0 756.0,8.0 762.0,30.0 745.0,36.0" fill="#d8cfbd" />
<polygon points="646.0,121.0 663.0,117.0 677.0,124.0 693.0,119.0 708.0,121.0 718.0,112.0 728.0,100.0 741.0,92.0 760.0,88.0 775.0,80.0 789.0,66.0 797.0,55.0 801.0,39.0 804.0,20.0 806.0,0.0 834.0,0.0 830.0,20.0 824.0,39.0 817.0,64.0 808.0,78.0 795.0,92.0 780.0,100.0 760.0,112.0 740.0,120.0 724.0,130.0 712.0,137.0 693.0,140.0 663.0,134.0 650.0,128.0" fill="#aad3df" />
<polyline points="834.0,0.0 830.0,20.0 824.0,39.0 817.0,64.0 808.0,78.0 795.0,92.0 780.0,100.0 760.0,112.0 740.0,120.0 724.0,130.0 712.0,137.0" fill="none" stroke="#c6ecc4" stroke-width="3" stroke-linejoin="round" stroke-linecap="round" />
<polyline points="650.0,121.0 663.0,117.0 670.0,124.0 677.0,129.0 685.0,121.0 693.0,119.0 700.0,126.0 708.0,121.0 716.0,114.0" fill="none" stroke="#cdeec9" stroke-width="4" stroke-linejoin="round" stroke-linecap="round" />
<polyline points="728.0,100.0 741.0,92.0 760.0,88.0 775.0,80.0" fill="none" stroke="#cdeec9" stroke-width="3" stroke-linejoin="round" stroke-linecap="round" />
<polygon points="764.0,39.0 789.0,45.0 786.0,68.0 770.0,66.0" fill="#b3dcc3" />
<polygon points="834.0,0.0 839.0,0.0 862.7,44.7 816.0,81.6 789.4,101.0 795.0,92.0 808.0,78.0 817.0,64.0 824.0,39.0 830.0,20.0" fill="#cbe3c2" />
<polygon points="789.4,103.0 816.0,83.0 846.0,60.0 874.0,122.5 862.0,128.0 817.4,120.0 801.3,118.3 792.0,108.0" fill="#dff6dc" />
<rect x="812" y="81" width="13" height="10" fill="#b5dfc6" />
<rect x="862" y="112" width="12" height="12" fill="#b5dfc6" />
<polygon points="864.6,44.7 897.6,50.5 919.0,97.2 907.4,105.0 889.9,97.2 858.8,81.6 864.6,68.0" fill="#d3e9b5" />
<polygon points="897.6,44.7 920.0,38.9 920.0,101.0 914.0,95.0" fill="#aad3df" />
<polyline points="897.6,46.0 905.0,70.0 916.0,97.0" fill="none" stroke="#b08ae0" stroke-width="3" stroke-linejoin="round" stroke-linecap="butt" stroke-dasharray="2.2 2.2"/>
<polygon points="870.0,0.0 920.0,0.0 920.0,8.0 880.0,10.0" fill="#aad3df" />
<rect x="857" y="19" width="17" height="22" fill="#cdeccb" />
<rect x="862" y="24" width="8" height="10" fill="#f0c8c8" />
<polyline points="857.0,0.0 880.0,10.0 920.0,8.0" fill="none" stroke="#b08ae0" stroke-width="2.5" stroke-linejoin="round" stroke-linecap="butt" stroke-dasharray="2.2 2.2"/>
<polygon points="760.0,40.0 790.0,45.0 785.0,66.0 765.0,60.0" fill="#bfe3c9" />
<polyline points="79.0,75.0 85.0,54.0 92.0,45.0 99.0,42.0 124.5,34.0 150.0,32.5 300.0,29.0 420.0,20.0 460.0,14.0 513.7,0.0" fill="none" stroke="#ffffff" stroke-width="3.2" stroke-linejoin="round" stroke-linecap="round" />
<polyline points="233.5,0.0 222.0,28.3 212.0,75.0 203.0,150.0" fill="none" stroke="#ffffff" stroke-width="3.2" stroke-linejoin="round" stroke-linecap="round" />
<polyline points="105.0,90.5 150.0,90.5 300.0,97.0 376.0,74.0 434.0,81.7 461.6,90.5 496.6,91.4 541.4,77.8 600.0,60.0" fill="none" stroke="#ffffff" stroke-width="3.2" stroke-linejoin="round" stroke-linecap="round" />
<polyline points="300.0,19.8 376.0,40.9 461.6,72.0 492.7,81.7 576.0,58.4 620.0,45.0" fill="none" stroke="#ffffff" stroke-width="3.2" stroke-linejoin="round" stroke-linecap="round" />
<polyline points="453.8,0.0 438.0,150.0" fill="none" stroke="#ffffff" stroke-width="3.2" stroke-linejoin="round" stroke-linecap="round" />
<polyline points="370.7,0.0 359.4,75.0 348.0,150.0" fill="none" stroke="#ffffff" stroke-width="3.2" stroke-linejoin="round" stroke-linecap="round" />
<polyline points="516.0,0.0 541.0,19.5 562.7,48.6 593.8,81.7 625.0,109.0 652.0,132.0 681.0,150.0" fill="none" stroke="#ffffff" stroke-width="3.2" stroke-linejoin="round" stroke-linecap="round" />
<polyline points="573.0,0.0 551.0,25.0" fill="none" stroke="#ffffff" stroke-width="3.2" stroke-linejoin="round" stroke-linecap="round" />
<polyline points="116.0,116.0 150.0,130.0 190.0,150.0" fill="none" stroke="#ffffff" stroke-width="3.2" stroke-linejoin="round" stroke-linecap="round" />
<polyline points="839.0,0.0 862.7,44.7 816.0,81.6 789.4,101.0 754.4,128.5 740.0,150.0" fill="none" stroke="#ffffff" stroke-width="3.2" stroke-linejoin="round" stroke-linecap="round" />
<polyline points="0.0,113.0 27.0,134.0 40.0,150.0" fill="none" stroke="#ffffff" stroke-width="3.2" stroke-linejoin="round" stroke-linecap="round" />
<polyline points="64.0,94.0 59.0,110.0 56.0,150.0" fill="none" stroke="#ffffff" stroke-width="3.2" stroke-linejoin="round" stroke-linecap="round" />
<polyline points="400.0,150.0 496.6,91.4" fill="none" stroke="#ffffff" stroke-width="3.2" stroke-linejoin="round" stroke-linecap="round" />
<polyline points="492.7,93.0 522.0,150.0" fill="none" stroke="#ffffff" stroke-width="3.2" stroke-linejoin="round" stroke-linecap="round" />
<polyline points="576.0,75.0 640.0,101.0 700.0,120.0 760.0,130.0 920.0,100.0" fill="none" stroke="#ffffff" stroke-width="3.2" stroke-linejoin="round" stroke-linecap="round" />
<polyline points="640.0,0.0 680.0,60.0 741.0,121.0" fill="none" stroke="#ffffff" stroke-width="3.2" stroke-linejoin="round" stroke-linecap="round" />
<polyline points="0.0,40.0 60.0,20.0" fill="none" stroke="#ffffff" stroke-width="3.2" stroke-linejoin="round" stroke-linecap="round" />
<polyline points="22.0,90.2 103.0,90.2" fill="none" stroke="#cfcc88" stroke-width="6.5" stroke-linejoin="round" stroke-linecap="round" />
<polyline points="22.0,90.2 103.0,90.2" fill="none" stroke="#f6f4b5" stroke-width="5" stroke-linejoin="round" stroke-linecap="round" />
<polyline points="676.0,58.0 695.0,50.0" fill="none" stroke="#f1f3b8" stroke-width="5" stroke-linejoin="round" stroke-linecap="round" />
<polyline points="120.0,0.0 113.0,13.0 99.0,31.0 93.0,42.0 95.0,48.0 102.0,59.0 105.0,75.0 105.0,99.0 113.0,112.0 116.0,116.0 107.5,129.0 90.5,150.0" fill="none" stroke="#d39d69" stroke-width="5" stroke-linejoin="round" stroke-linecap="round" />
<polyline points="120.0,0.0 113.0,13.0 99.0,31.0 93.0,42.0 95.0,48.0 102.0,59.0 105.0,75.0 105.0,99.0 113.0,112.0 116.0,116.0 107.5,129.0 90.5,150.0" fill="none" stroke="#f8c98f" stroke-width="3.6" stroke-linejoin="round" stroke-linecap="round" />
<polyline points="669.0,19.5 673.0,39.0 679.0,62.0 663.5,78.0 634.0,93.0 605.0,120.6 576.0,150.0" fill="none" stroke="#d39d69" stroke-width="5.5" stroke-linejoin="round" stroke-linecap="round" />
<polyline points="669.0,19.5 673.0,39.0 679.0,62.0 663.5,78.0 634.0,93.0 605.0,120.6 576.0,150.0" fill="none" stroke="#f8c98f" stroke-width="4" stroke-linejoin="round" stroke-linecap="round" />
<polyline points="669.0,19.5 662.0,8.0 664.0,0.0" fill="none" stroke="#d39d69" stroke-width="5" stroke-linejoin="round" stroke-linecap="round" />
<polyline points="669.0,19.5 662.0,8.0 664.0,0.0" fill="none" stroke="#f8c98f" stroke-width="3.6" stroke-linejoin="round" stroke-linecap="round" />
<polyline points="669.0,19.5 680.0,8.0 685.0,0.0" fill="none" stroke="#d39d69" stroke-width="5" stroke-linejoin="round" stroke-linecap="round" />
<polyline points="669.0,19.5 680.0,8.0 685.0,0.0" fill="none" stroke="#f8c98f" stroke-width="3.6" stroke-linejoin="round" stroke-linecap="round" />
<polyline points="600.0,150.0 630.0,120.0" fill="none" stroke="#d39d69" stroke-width="5" stroke-linejoin="round" stroke-linecap="round" />
<polyline points="133.0,0.0 127.0,14.0 124.5,31.0 126.0,50.0 129.0,75.0 134.4,150.0" fill="none" stroke="#6d6d6d" stroke-width="2.6" stroke-linejoin="round" stroke-linecap="round" />
<polyline points="179.7,0.0 188.2,18.4 191.0,34.0 195.3,53.8 199.5,75.0 202.4,93.4 198.0,111.8 192.5,134.4 195.3,150.0" fill="none" stroke="#6d6d6d" stroke-width="2.6" stroke-linejoin="round" stroke-linecap="round" />
<polyline points="539.0,57.0 543.0,85.0 555.0,102.0 563.0,119.0 560.0,136.0 549.0,150.0" fill="none" stroke="#6a6a6a" stroke-width="8.5" stroke-linejoin="round" stroke-linecap="round" />
<polyline points="536.0,28.0 539.0,57.0 543.0,85.0" fill="none" stroke="#6f6f6f" stroke-width="4.5" stroke-linejoin="round" stroke-linecap="round" />
<polyline points="545.0,110.0 554.0,122.0 552.0,140.0" fill="none" stroke="#9a9a9a" stroke-width="1" stroke-linejoin="round" stroke-linecap="butt" />
<polyline points="127.0,0.0 120.0,25.5 124.5,34.0" fill="none" stroke="#b49ad0" stroke-width="1.4" stroke-linejoin="round" stroke-linecap="butt" stroke-dasharray="3 2"/>
<polyline points="150.0,128.8 235.0,121.7 300.0,150.0" fill="none" stroke="#b49ad0" stroke-width="1.2" stroke-linejoin="round" stroke-linecap="butt" stroke-dasharray="3 2"/>
<polyline points="321.0,150.0 434.0,81.7 461.6,90.5 492.7,82.0" fill="none" stroke="#b49ad0" stroke-width="1.2" stroke-linejoin="round" stroke-linecap="butt" stroke-dasharray="3 2"/>
<polyline points="765.0,145.0 800.0,133.0 870.0,128.0 920.0,120.0" fill="none" stroke="#a0a0a0" stroke-width="2" stroke-linejoin="round" stroke-linecap="round" />
<polyline points="420.0,2.0 350.0,3.0 300.0,8.0 295.7,10.0 273.0,22.6 267.4,28.3 254.7,38.2 227.8,75.0 213.7,93.4" fill="none" stroke="#3344dd" stroke-width="1" stroke-linejoin="round" stroke-linecap="butt" stroke-dasharray="1 2.4"/>
<polyline points="634.0,38.0 612.0,57.0 620.0,80.0 630.0,92.0 636.0,99.0" fill="none" stroke="#b08ae0" stroke-width="3.6" stroke-linejoin="round" stroke-linecap="butt" stroke-dasharray="2.4 2"/>
<polyline points="634.0,38.0 650.0,48.0 662.0,56.0 677.0,63.0" fill="none" stroke="#b08ae0" stroke-width="3.6" stroke-linejoin="round" stroke-linecap="butt" stroke-dasharray="2.4 2"/>
<polyline points="685.0,8.0 700.0,18.0 716.0,25.0 735.0,35.0 760.0,45.0 764.0,55.0 770.0,68.0 775.0,72.0 790.0,60.0 799.0,45.0 803.0,25.0 806.0,0.0" fill="none" stroke="#b08ae0" stroke-width="3.6" stroke-linejoin="round" stroke-linecap="butt" stroke-dasharray="2.4 2"/>
<polyline points="742.0,0.0 722.0,22.0 700.0,45.0 676.0,64.0 650.0,88.0 632.0,108.0 612.0,132.0 598.0,150.0" fill="none" stroke="#b08ae0" stroke-width="3.6" stroke-linejoin="round" stroke-linecap="butt" stroke-dasharray="2.4 2"/>
<polyline points="780.0,0.0 770.0,20.0 752.0,40.0 730.0,58.0 700.0,82.0 680.0,100.0" fill="none" stroke="#b08ae0" stroke-width="3.6" stroke-linejoin="round" stroke-linecap="butt" stroke-dasharray="2.4 2"/>
<polyline points="660.0,97.0 680.0,113.0 700.0,100.0 720.0,85.0 740.0,70.0" fill="none" stroke="#b08ae0" stroke-width="3.6" stroke-linejoin="round" stroke-linecap="butt" stroke-dasharray="2.4 2"/>
<polyline points="744.0,0.0 760.0,21.0 785.0,30.0 796.0,35.0" fill="none" stroke="#b08ae0" stroke-width="3.6" stroke-linejoin="round" stroke-linecap="butt" stroke-dasharray="2.4 2"/>
<polyline points="760.0,0.0 765.0,8.0" fill="none" stroke="#b08ae0" stroke-width="3.6" stroke-linejoin="round" stroke-linecap="butt" stroke-dasharray="2.4 2"/>
<polyline points="696.0,12.0 720.0,30.0 760.0,50.0 776.0,60.0" fill="none" stroke="#3344dd" stroke-width="1" stroke-linejoin="round" stroke-linecap="butt" stroke-dasharray="1 2.4"/>
<polyline points="776.0,73.0 790.0,80.0 797.0,88.0" fill="none" stroke="#3344dd" stroke-width="1" stroke-linejoin="round" stroke-linecap="butt" stroke-dasharray="1 2.4"/>
<polyline points="789.0,104.0 796.0,115.0 810.0,119.0 820.0,119.0" fill="none" stroke="#3344dd" stroke-width="1" stroke-linejoin="round" stroke-linecap="butt" stroke-dasharray="1 2.4"/>
<text x="322" y="40.5" font-family="Liberation Sans" font-size="13" fill="#333" stroke="#fff" stroke-width="2.5" stroke-opacity=".55" paint-order="stroke">Frederiksberg</text>
<text x="487.5" y="141.5" font-family="Liberation Sans" font-size="13" fill="#333" stroke="#fff" stroke-width="2.5" stroke-opacity=".55" paint-order="stroke">Vesterbro</text>
<text x="645" y="98.5" font-family="Liberation Sans" font-size="13" fill="#333" stroke="#fff" stroke-width="2.5" stroke-opacity=".55" paint-order="stroke">Christianshavn</text>
<text x="607" y="118.5" font-family="Liberation Sans" font-size="11.5" fill="#222" stroke="#fff" stroke-width="2.5" stroke-opacity=".55" paint-order="stroke">Langebro</text>
<text x="806" y="103" font-family="Liberation Sans" font-size="10.2" fill="#3d8a3d" font-style="italic">Kløvermarken</text>
<text x="10" y="69.5" font-family="Liberation Sans" font-size="10.5" fill="#5b82b8" font-style="italic" fill-opacity=".8">Damhussøen</text>
<text x="644" y="86" font-family="Liberation Sans" font-size="11" fill="#5a63e0" transform="rotate(-40 644 86)">Havnebussen 992</text>
<text x="686" y="82" font-family="Liberation Sans" font-size="11" fill="#5a63e0" transform="rotate(-46 686 82)">Havnebussen 991</text>
<text x="622" y="150" font-family="Liberation Sans" font-size="11" fill="#5a63e0" transform="rotate(-55 622 150)">ussen</text>
<rect x="0.5" y="83.5" width="20" height="17" fill="#f1efd9" stroke="#c8c2a0" stroke-width="1"/>
<text x="2" y="96" font-family="Liberation Sans" font-size="10" fill="#555" >156</text>
<rect x="124.5" y="31" width="3" height="4" fill="#5b6fb0" />
<rect x="190.0" y="32.7" width="3" height="4" fill="#5b6fb0" />
<rect x="129.5" y="106" width="3" height="4" fill="#5b6fb0" />
<rect x="193.5" y="145" width="3" height="4" fill="#5b6fb0" />
<rect x="532.0" y="55.4" width="3" height="4" fill="#5b6fb0" />
<rect x="549.5" y="90.4" width="3" height="4" fill="#5b6fb0" />
<path d="M452.6 58.7 A13.6 13.6 0 1 1 463.8 58.7 L457.9 68.5 Z" fill="#3a0bc8" stroke="#000" stroke-width="1.7" stroke-linejoin="round"/>
<text x="458.3" y="53.8" font-family="Liberation Sans" font-size="21.5" fill="#151515" text-anchor="middle">C</text></svg>
<div style="position:absolute;left:8px;top:8px;width:30px;height:56px;border:2px solid rgba(0,0,0,.2);border-radius:5px;background-clip:padding-box"></div>
<div style="position:absolute;left:10px;top:10px;width:26px;height:52px;background:#fff;border-radius:4px;overflow:hidden">
<div style="position:absolute;left:0;top:26px;width:26px;height:1px;background:#ccc"></div>
<div style="position:absolute;left:0;top:0;width:26px;height:26px;font:bold 18px/26px 'Liberation Sans',sans-serif;text-align:center;color:#000">+</div>
<div style="position:absolute;left:0;top:27px;width:26px;height:25px;font:bold 18px/24px 'Liberation Sans',sans-serif;text-align:center;color:#000">&#8211;</div>
</div>
<div style="position:absolute;left:872px;top:8px;width:40px;height:40px;border:2px solid rgba(0,0,0,.2);border-radius:5px"></div>
<div style="position:absolute;left:874px;top:10px;width:36px;height:36px;background:#fff;border-radius:4px">
<svg width="36" height="36" viewBox="0 0 36 36" style="position:absolute;left:0;top:0">
<path d="M5 23.5 L18 16.5 L31 23.5 L18 30.5z" fill="#bdbdbd" stroke="#777" stroke-width="0.8"/>
<path d="M5 19.5 L18 12.5 L31 19.5 L18 26.5z" fill="#cfcfcf" stroke="#777" stroke-width="0.8"/>
<path d="M5 15.5 L18 8.5 L31 15.5 L18 22.5z" fill="#e9e9e9" stroke="#888" stroke-width="0.8"/>
</svg></div>
<div style="position:absolute;right:0;bottom:0;height:15px;padding:0 5px 0 3px;background:rgba(255,255,255,.72);font:11px/15px 'Liberation Sans',sans-serif;letter-spacing:-0.12px;color:#0078a8;white-space:nowrap">Leaflet <span style="color:#888">|</span> Terms &amp; Feedback</div>
</div>

<div class="abs title">Lorem A/S</div>
<div class="abs sub">Click to see subsidiaries</div>

<!-- col 1 -->
<div class="abs t b" style="left:45px;top:227px">Company</div>
<div class="abs t u" style="left:187px;top:227px">Lorem A/S</div>
<div class="abs t b" style="left:45px;top:248px">Address</div>
<div class="abs t" style="left:187px;top:248px">Østerbrogade 17<br>2100 København Ø</div>
<div class="abs t b" style="left:45px;top:285px">Telephone</div>
<div class="abs t" style="left:187px;top:285px">55664455</div>
<div class="abs t b" style="left:45px;top:306px">VAT no.</div>
<div class="abs t" style="left:187px;top:306px">23454323</div>

<div class="sep" style="left:329px"></div>
<!-- col 2 -->
<div class="abs t b" style="left:336px;top:227px">Customer number</div>
<div class="abs t" style="left:473px;top:227px">1001</div>
<div class="abs t b" style="left:336px;top:248px">Creditor number</div>
<div class="abs t" style="left:473px;top:248px">2501</div>
<div class="abs t b" style="left:336px;top:269px">Email</div>
<div class="abs t u" style="left:473px;top:269px">lorem@info.dk</div>
<div class="abs t b" style="left:336px;top:290px">Invoice email</div>
<div class="abs t u" style="left:473px;top:290px">lorem@faktura.dk</div>
<div class="abs t b" style="left:336px;top:311px">Web</div>
<div class="abs t u" style="left:473px;top:311px">lorem.dk</div>

<div class="sep" style="left:617px"></div>
<!-- col 3 -->
<div class="abs t b" style="left:623px;top:227px">Company type</div>
<div class="abs" style="left:759px;top:226px;width:15px;height:15px;background:#3a0ca8;color:#fff;font-size:11px;line-height:14px;text-align:center">c</div>
<div class="abs t" style="left:779px;top:227px">Company</div>
<div class="abs t b" style="left:623px;top:248px">Subcontractor</div>
<div class="abs t" style="left:759px;top:248px">No</div>
<div class="abs t b" style="left:623px;top:269px">Created by</div>
<div class="abs t u" style="left:759px;top:269px">Winona Goldmand</div>
<div class="abs t b" style="left:623px;top:290px">Cost price</div>
<div class="abs t" style="left:759px;top:290px">3.142,50</div>
<div class="abs t b" style="left:623px;top:311px">Inv. amount</div>
<div class="abs t" style="left:759px;top:311px">100.000,00</div>
<div class="abs t b" style="left:623px;top:332px">Profit margin</div>
<div class="abs t" style="left:759px;top:332px">96,86 %</div>
<div class="abs t b" style="left:623px;top:353px">Total cost price</div>
<div class="abs t" style="left:759px;top:353px">3.142,50</div>
<div class="abs t b" style="left:623px;top:374px">Total inv. amount</div>
<div class="abs t" style="left:759px;top:374px">102.300,00</div>
<div class="abs t b" style="left:623px;top:395px">Total profit margin</div>
<div class="abs t" style="left:759px;top:395px">96,93 %</div>

<!-- buttons -->
<div class="btn" style="left:104px;width:34px">Edit</div>
<div class="btn" style="left:152px;width:64px">Create...</div>
<div class="btn" style="left:230px;width:44px">Block</div>
<div class="btn" style="left:288px;width:51px">Delete</div>
<div class="btn" style="left:353px;width:77px">Deactivate</div>
<div class="btn" style="left:444px;width:154px">Combine with duplicate</div>
<div class="btn" style="left:612px;width:92px">Save as PDF</div>
<div class="btn" style="left:718px;width:97px">Return to lists</div>
<div class="btn" style="left:829px;width:76px;text-align:left;padding-left:4px">Less...</div><svg width="14" height="14" viewBox="0 0 14 14" style="position:absolute;z-index:2;left:886px;top:439px"><g transform="rotate(30 7 7)"><rect x="5" y="0.6" width="4" height="2.4" fill="#2a2a2a"/><rect x="5" y="3.6" width="4" height="6.2" fill="#2a2a2a"/><rect x="6.6" y="3.8" width="0.8" height="5.8" fill="#fff" fill-opacity=".75"/><path d="M5 9.8 L7 13.4 L9 9.8z" fill="#2a2a2a" fill-opacity=".55"/><path d="M6.2 12 L7 13.5 L7.8 12z" fill="#2a2a2a"/></g></svg>

<!-- tabs -->
<div class="tab" style="left:39px;top:498px">ACTIVITY</div>
<div class="tab on" style="left:156px;top:498px">ADDRESSES</div>
<div class="tab" style="left:273px;top:498px">CALENDAR</div>
<div class="tab" style="left:390px;top:498px">CALL</div>
<div class="tab" style="left:507px;top:498px">CAMPAIGNS</div>
<div class="tab" style="left:624px;top:498px">COMPETENCES</div>
<div class="tab" style="left:741px;top:498px">DEPOT ORDERS</div>
<div class="tab" style="left:858px;top:498px">DIRECT ORDER</div>
<div class="tab" style="left:39px;top:520px">DISCLOSURE</div>
<div class="tab" style="left:156px;top:520px">DISPATCHES</div>
<div class="tab" style="left:273px;top:520px">ECONOMY</div>
<div class="tab" style="left:390px;top:520px">EMAILS</div>
<div class="tab" style="left:507px;top:520px">EQUIPMENT</div>
<div class="tab" style="left:624px;top:520px">FEES</div>
<div class="tab" style="left:741px;top:520px">FILES</div>
<div class="tab" style="left:858px;top:520px">FLOOR PLAN</div>
<div class="tab" style="left:39px;top:542px">FORMS</div>
<div class="tab" style="left:156px;top:542px">HOURS</div>
<div class="tab" style="left:273px;top:542px">INTERESTS</div>
<div class="tab" style="left:390px;top:542px">INVOICING</div>
<div class="tab" style="left:507px;top:542px">MAP</div>
<div class="tab" style="left:624px;top:542px">NOTES</div>
<div class="tab" style="left:741px;top:542px">OBJECT ACCESS</div>
<div class="tab" style="left:858px;top:542px">PERSONS</div>
<div class="tab" style="left:39px;top:564px">PLANNING</div>
<div class="tab" style="left:156px;top:564px">PRICES</div>
<div class="tab" style="left:273px;top:564px">PROCEDURES</div>
<div class="tab" style="left:390px;top:564px">PRODUCT NO.</div>
<div class="tab" style="left:507px;top:564px">QUOTATION</div>
<div class="tab" style="left:624px;top:564px">RELATIONS</div>
<div class="tab" style="left:741px;top:564px">REMINDERS</div>
<div class="tab" style="left:858px;top:564px">ROUTES</div>
<div class="tab" style="left:39px;top:586px">STATISTICS</div>
<div class="tab" style="left:156px;top:586px">STOCK</div>
<div class="tab" style="left:273px;top:586px">SUBSCRIPTION</div>
<div class="tab" style="left:390px;top:586px">SUPPORT</div>
<div class="tab" style="left:507px;top:586px">TASKS</div>
<div class="tab" style="left:624px;top:586px">UNIT TREE</div>
<div class="tab" style="left:741px;top:586px">UNITS</div>
<div class="tab" style="left:858px;top:586px">WEEK LIST</div>

<div id="panel2"></div>
<div class="abs newaddr">New address</div>

<div id="filter">Filter (Ctrl+Y)</div>
<div class="abs total">Total 2 rows</div>

<div id="grid">
<div class="hdr"></div>
<div class="hl" style="top:26px"></div>
<div class="row" style="top:27px;height:24px;background:#fff"></div>
<div class="row" style="top:51px;height:24px;background:#eeeeee"></div>
<div class="vl" style="left:38px;width:2px;background:#a8a8a8"></div>
<div class="vl" style="left:245px"></div>
<div class="vl" style="left:401px"></div>
<div class="vl" style="left:477px"></div>
<div class="vl" style="left:543px"></div>
<div class="vl" style="left:699px"></div>
<div class="vl" style="left:855px"></div>
<div class="vl" style="left:1011px"></div>
<div style="position:absolute;left:1012px;top:27px;width:18px;height:48px;background:#8a8a8a"></div>
<svg width="14" height="14" viewBox="0 0 14 14" style="position:absolute;left:11px;top:6px;opacity:.72"><g transform="rotate(30 7 7)"><rect x="5" y="0.6" width="4" height="2.4" fill="#d8d8d8"/><rect x="5" y="3.6" width="4" height="6.2" fill="#d8d8d8"/><rect x="6.6" y="3.8" width="0.8" height="5.8" fill="#fff" fill-opacity=".75"/><path d="M5 9.8 L7 13.4 L9 9.8z" fill="#d8d8d8" fill-opacity=".55"/><path d="M6.2 12 L7 13.5 L7.8 12z" fill="#d8d8d8"/></g></svg><svg width="14" height="14" viewBox="0 0 14 14" style="position:absolute;left:11px;top:31px"><g transform="rotate(30 7 7)"><rect x="5" y="0.6" width="4" height="2.4" fill="#222"/><rect x="5" y="3.6" width="4" height="6.2" fill="#222"/><rect x="6.6" y="3.8" width="0.8" height="5.8" fill="#fff" fill-opacity=".75"/><path d="M5 9.8 L7 13.4 L9 9.8z" fill="#222" fill-opacity=".55"/><path d="M6.2 12 L7 13.5 L7.8 12z" fill="#222"/></g></svg><svg width="14" height="14" viewBox="0 0 14 14" style="position:absolute;left:11px;top:55px"><g transform="rotate(30 7 7)"><rect x="5" y="0.6" width="4" height="2.4" fill="#222"/><rect x="5" y="3.6" width="4" height="6.2" fill="#222"/><rect x="6.6" y="3.8" width="0.8" height="5.8" fill="#fff" fill-opacity=".75"/><path d="M5 9.8 L7 13.4 L9 9.8z" fill="#222" fill-opacity=".55"/><path d="M6.2 12 L7 13.5 L7.8 12z" fill="#222"/></g></svg>
<div class="hc" style="left:44px">Full address</div><div class="arr" style="left:225px"></div>
<div class="hc" style="left:251px">Name 1</div><div class="arr" style="left:381px"></div>
<div class="hc" style="left:407px">Type</div><div class="arr" style="left:457px"></div>
<div class="hc" style="left:483px">Lo...</div><div class="arr" style="left:523px"></div>
<div class="hc" style="left:549px">Address</div><div class="arr" style="left:679px"></div>
<div class="hc" style="left:705px">City</div><div class="arr" style="left:835px"></div>
<div class="hc" style="left:861px">EAN</div><div class="arr" style="left:991px"></div>
<div class="cell" style="left:44px;top:27px;width:197px">New delivery, Østerbrogade 17, ...</div>
<div class="cell" style="left:251px;top:27px;width:145px">New delivery</div>
<div class="cell" style="left:407px;top:27px;width:66px;text-align:right">0</div>
<div class="cell" style="left:483px;top:27px;width:56px">(55.715...</div>
<div class="cell" style="left:549px;top:27px;width:145px">Østerbrogade 17</div>
<div class="cell" style="left:705px;top:27px;width:145px">København Ø</div>
<div class="cell" style="left:44px;top:51px;width:197px">Alternative address, Østerbroga...</div>
<div class="cell" style="left:251px;top:51px;width:145px">Alternative address</div>
<div class="cell" style="left:407px;top:51px;width:66px;text-align:right">0</div>
<div class="cell" style="left:483px;top:51px;width:56px">(55.675...</div>
<div class="cell" style="left:549px;top:51px;width:145px">Østerbrogade12</div>
<div class="cell" style="left:705px;top:51px;width:145px">København Ø</div>
</div>
<svg width="14" height="20" viewBox="0 0 14 20" style="position:absolute;left:1039px;top:754px"><path d="M0.5 0.5 L0.5 16 L4.2 12.5 L6.8 18.6 L9 17.6 L6.5 11.6 L11.5 11.6 Z" fill="#fff" stroke="#000" stroke-width="1"/></svg>
</body></html>
